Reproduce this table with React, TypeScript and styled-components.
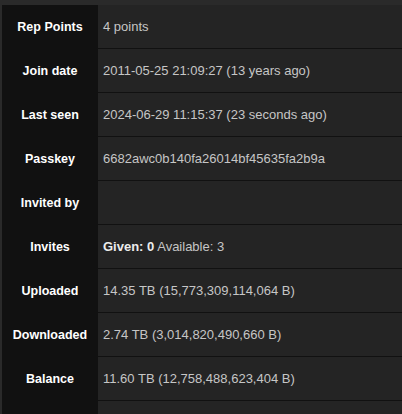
import React from 'react'
import styled, { createGlobalStyle } from 'styled-components'

const GlobalStyle = createGlobalStyle`
  html, body {
    margin: 0;
    padding: 0;
    background: #2a2a2a;
  }
  body {
    font-family: "Liberation Sans", Arial, sans-serif;
    overflow: hidden;
  }
`

const Page = styled.div`
  padding: 5px 0 0 2px;
  height: 414px;
  box-sizing: border-box;
  overflow: hidden;
`

const Table = styled.div`
  display: flex;
  flex-direction: column;
  background: #111111;
`

const Row = styled.div`
  display: grid;
  grid-template-columns: 96px 1fr;
  height: 44px;
`

const Label = styled.div`
  display: flex;
  align-items: center;
  justify-content: center;
  background: #111111;
  color: #ffffff;
  font-size: 12.5px;
  font-weight: bold;
  border-bottom: 1px solid #111111;
`

const Value = styled.div`
  display: flex;
  align-items: center;
  padding-left: 5px;
  background: #242424;
  color: #c6c6c6;
  font-size: 13px;
  border-bottom: 1px solid #111111;
  white-space: nowrap;
`

const Strong = styled.b`
  color: #ececec;
  font-weight: bold;
`

type Item = { label: string; value?: React.ReactNode }

const rows: Item[] = [
  { label: 'Rep Points', value: '4 points' },
  { label: 'Join date', value: '2011-05-25 21:09:27 (13 years ago)' },
  { label: 'Last seen', value: '2024-06-29 11:15:37 (23 seconds ago)' },
  { label: 'Passkey', value: '6682awc0b140fa26014bf45635fa2b9a' },
  { label: 'Invited by' },
  {
    label: 'Invites',
    value: (
      <span>
        <Strong>Given: 0</Strong> Available: 3
      </span>
    ),
  },
  { label: 'Uploaded', value: '14.35 TB (15,773,309,114,064 B)' },
  { label: 'Downloaded', value: '2.74 TB (3,014,820,490,660 B)' },
  { label: 'Balance', value: '11.60 TB (12,758,488,623,404 B)' },
  { label: '' },
]

export default function App() {
  return (
    <>
      <GlobalStyle />
      <Page>
        <Table>
          {rows.map((r, i) => (
            <Row key={i}>
              <Label>{r.label}</Label>
              <Value>{r.value}</Value>
            </Row>
          ))}
        </Table>
      </Page>
    </>
  )
}
